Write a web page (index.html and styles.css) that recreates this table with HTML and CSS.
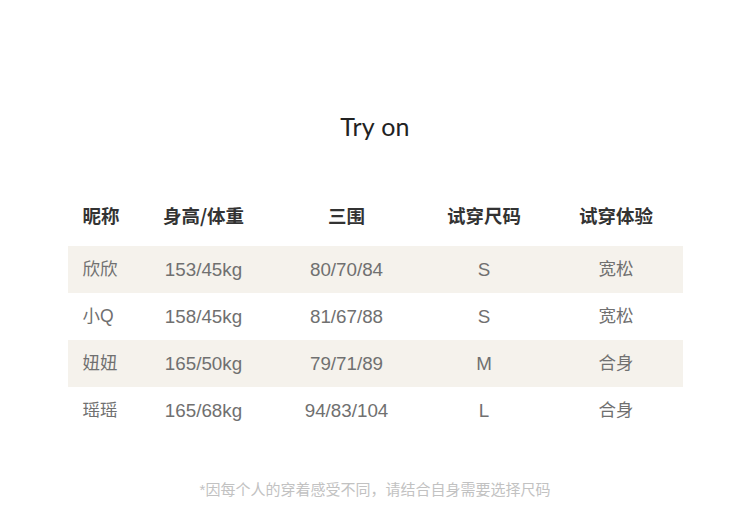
FILE: index.html
```html
<!DOCTYPE html>
<html lang="zh">
<head>
<meta charset="utf-8">
<link rel="stylesheet" href="styles.css">
</head>
<body>
<main class="page">
  <h1 class="title">Try on</h1>
  <div class="table">
    <div class="row head">
      <div class="c first">昵称</div>
      <div class="c">身高/体重</div>
      <div class="c">三围</div>
      <div class="c">试穿尺码</div>
      <div class="c">试穿体验</div>
    </div>
    <div class="row shade">
      <div class="c first zh">欣欣</div>
      <div class="c">153/45kg</div>
      <div class="c">80/70/84</div>
      <div class="c">S</div>
      <div class="c zh">宽松</div>
    </div>
    <div class="row">
      <div class="c first zh">小Q</div>
      <div class="c">158/45kg</div>
      <div class="c">81/67/88</div>
      <div class="c">S</div>
      <div class="c zh">宽松</div>
    </div>
    <div class="row shade">
      <div class="c first zh">妞妞</div>
      <div class="c">165/50kg</div>
      <div class="c">79/71/89</div>
      <div class="c">M</div>
      <div class="c zh">合身</div>
    </div>
    <div class="row">
      <div class="c first zh">瑶瑶</div>
      <div class="c">165/68kg</div>
      <div class="c">94/83/104</div>
      <div class="c">L</div>
      <div class="c zh">合身</div>
    </div>
  </div>
  <p class="note">*因每个人的穿着感受不同，请结合自身需要选择尺码</p>
</main>
</body>
</html>
```

FILE: styles.css
```css
html, body {
  margin: 0;
  padding: 0;
  background: #ffffff;
}
.page {
  width: 750px;
  height: 527px;
  display: flex;
  flex-direction: column;
  align-items: center;
  font-family: "Liberation Sans", Arial, "Noto Sans CJK SC", sans-serif;
}
.title {
  margin: 109px 0 0 0;
  height: 34px;
  line-height: 34px;
  font-family: Lato, "Open Sans", sans-serif;
  font-weight: 400;
  font-size: 25px;
  color: #222;
  letter-spacing: 0.3px;
}
.table {
  margin-top: 55px;
  width: 615px;
  display: flex;
  flex-direction: column;
}
.row {
  display: grid;
  grid-template-columns: 65px 142px 144px 131px 133px;
  height: 47px;
  align-items: center;
  font-size: 18.8px;
  color: #707070;
}
.row.head {
  box-sizing: border-box;
  height: 48px;
  padding-bottom: 14px;
  font-size: 18.5px;
  font-weight: 700;
  color: #333;
  font-family: "Noto Sans CJK SC", "Liberation Sans", sans-serif;
}
.row.shade {
  background: #f5f2ec;
}
.c {
  text-align: center;
  white-space: nowrap;
}
.c.zh {
  font-size: 17.5px;
  padding-bottom: 5px;
}
.c.first {
  text-align: left;
  padding-left: 15px;
}
.note {
  margin: 44px 0 0 0;
  font-size: 15px;
  color: #c2c2c2;
  font-family: "Liberation Sans", "Noto Sans CJK SC", sans-serif;
}
```
